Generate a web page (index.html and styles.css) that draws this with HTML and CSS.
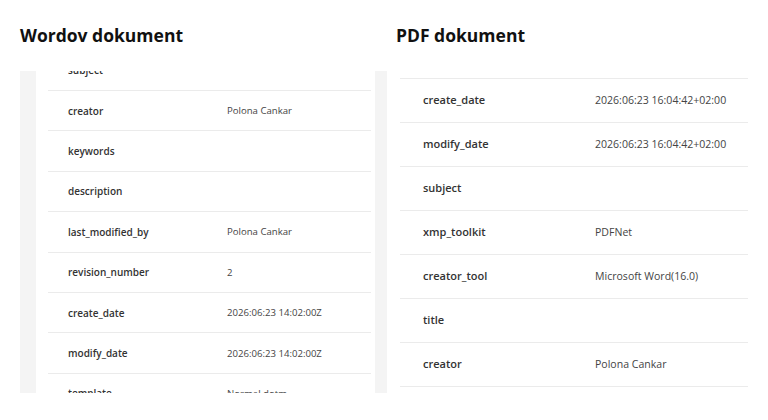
FILE: index.html
```html
<!DOCTYPE html>
<html lang="sl">

<head>
    <meta charset="UTF-8">
    <title>Primerjava metapodatkov</title>
    <link rel="stylesheet" href="styles.css">
</head>

<body>
    <div class="compare">
        <div class="column column-word">
            <h2>Wordov dokument</h2>
            <div class="word-frame">
                <div class="word-sheet">
                    <div class="word-rows">
                        <div class="row"><span class="key">subject</span><span class="val"></span></div>
                        <div class="row"><span class="key">creator</span><span class="val">Polona Cankar</span></div>
                        <div class="row"><span class="key">keywords</span><span class="val"></span></div>
                        <div class="row"><span class="key">description</span><span class="val"></span></div>
                        <div class="row"><span class="key">last_modified_by</span><span class="val">Polona Cankar</span></div>
                        <div class="row"><span class="key">revision_number</span><span class="val">2</span></div>
                        <div class="row"><span class="key">create_date</span><span class="val">2026:06:23 14:02:00Z</span></div>
                        <div class="row"><span class="key">modify_date</span><span class="val">2026:06:23 14:02:00Z</span></div>
                        <div class="row"><span class="key">template</span><span class="val">Normal.dotm</span></div>
                    </div>
                </div>
            </div>
        </div>

        <div class="column column-pdf">
            <h2>PDF dokument</h2>
            <div class="pdf-rows">
                <div class="row"><span class="key">create_date</span><span class="val">2026:06:23 16:04:42+02:00</span></div>
                <div class="row"><span class="key">modify_date</span><span class="val">2026:06:23 16:04:42+02:00</span></div>
                <div class="row"><span class="key">subject</span><span class="val"></span></div>
                <div class="row"><span class="key">xmp_toolkit</span><span class="val">PDFNet</span></div>
                <div class="row"><span class="key">creator_tool</span><span class="val">Microsoft Word(16.0)</span></div>
                <div class="row"><span class="key">title</span><span class="val"></span></div>
                <div class="row"><span class="key">creator</span><span class="val">Polona Cankar</span></div>
            </div>
        </div>
    </div>
</body>

</html>
```

FILE: styles.css
```css
body {
    margin: 0;
    background-color: #ffffff;
    color: #333333;
    font-family: 'Open Sans', 'Noto Sans', sans-serif;
}

.compare {
    display: grid;
    grid-template-columns: 367px 352px;
    column-gap: 9px;
    padding: 22px 0 0 20px;
}

h2 {
    margin: 0;
    font-size: 17.5px;
    line-height: 26px;
    font-weight: 700;
    color: #111111;
}

/* left: scrolled preview of the word table */
.word-frame {
    margin-top: 23px;
    height: 322px;
    overflow: hidden;
    background-color: #f4f4f4;
    padding: 0 12px 0 16px;
}

.word-sheet {
    background-color: #ffffff;
    height: 100%;
    overflow: hidden;
    padding: 0 4px 0 12px;
}

.word-rows {
    margin-top: -20.4px;
}

.word-rows .row {
    height: 40.4px;
    font-size: 10px;
}

.word-rows .key {
    padding-left: 20px;
    width: 159px;
}

/* right: pdf table */
.pdf-rows {
    margin: 30px 0 0 4px;
    border-top: 1px solid #ebebeb;
}

.pdf-rows .row {
    height: 44px;
    padding-bottom: 2px;
    font-size: 11px;
}

.pdf-rows .key {
    padding-left: 23px;
    width: 172px;
}

.row {
    box-sizing: border-box;
    display: flex;
    align-items: center;
    border-bottom: 1px solid #ebebeb;
}

.key {
    flex: none;
    font-weight: 600;
    color: #333333;
}

.val {
    font-size: 0.96em;
    color: #444444;
}
```
